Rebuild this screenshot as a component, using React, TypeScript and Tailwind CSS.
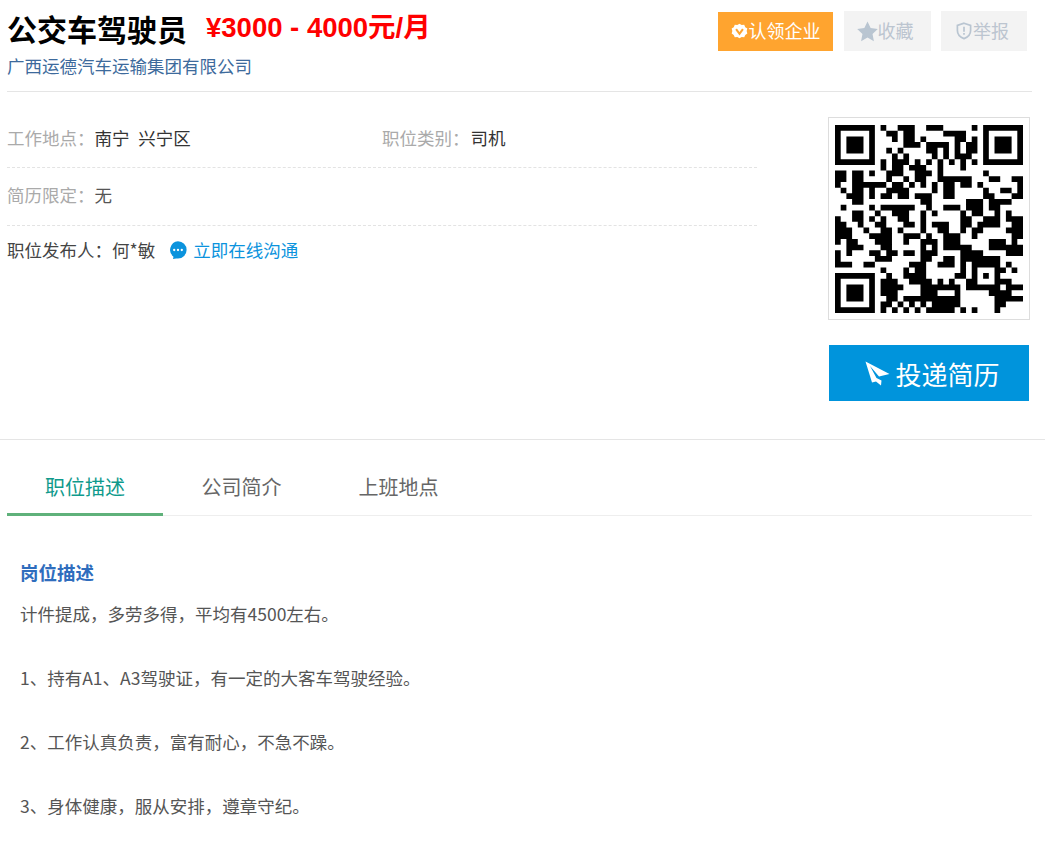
const QR_ROWS: number[][][] = [
  [[8,9],[11,14],[16,19],[24,25]],
  [[9,11],[12,14],[19,23]],
  [[10,11],[12,14],[15,16],[21,23],[24,25]],
  [[12,15],[16,20],[21,22],[23,24],[24,25]],
  [[9,10],[11,12],[16,18],[19,20],[21,22],[23,25]],
  [[10,11],[12,13],[17,18],[19,20],[21,24]],
  [[8,9],[10,12],[12,13],[14,15],[16,17],[18,19],[20,21],[22,23],[24,25]],
  [[8,9],[10,12],[13,16],[18,19],[22,23]],
  [[0,2],[3,5],[6,7],[9,12],[14,17],[18,19],[26,27]],
  [[0,2],[3,5],[9,10],[12,13],[14,16],[18,24],[27,29],[31,33]],
  [[0,1],[3,9],[10,12],[13,14],[15,16],[17,18],[19,21],[22,24],[25,26],[32,33]],
  [[1,2],[3,5],[6,7],[9,13],[17,18],[19,21],[26,27],[29,31],[32,33]],
  [[2,5],[6,7],[8,10],[11,13],[14,17],[19,21],[26,28],[31,33]],
  [[3,5],[15,17],[23,26],[27,31]],
  [[1,2],[6,7],[8,14],[16,17],[19,22],[23,26],[27,29]],
  [[3,5],[7,8],[10,13],[15,16],[17,18],[22,23],[24,26],[28,29],[30,31]],
  [[0,1],[3,5],[6,7],[8,9],[11,13],[15,16],[22,24],[26,29],[30,33]],
  [[0,2],[4,5],[7,9],[12,14],[15,16],[17,20],[22,24],[25,29],[31,33]],
  [[0,3],[5,6],[8,10],[11,12],[15,16],[18,20],[22,23],[24,26],[30,33]],
  [[0,3],[6,10],[12,15],[16,17],[19,22],[24,25],[31,33]],
  [[0,1],[2,4],[7,10],[12,13],[15,18],[19,22],[27,30],[31,32]],
  [[2,5],[8,10],[15,16],[17,18],[19,24],[27,33]],
  [[0,1],[2,3],[6,8],[9,11],[12,14],[15,18],[22,26],[30,33]],
  [[0,1],[7,10],[15,17],[19,21],[22,29]],
  [[0,3],[5,7],[13,16],[18,21],[22,23],[24,29],[30,31]],
  [[8,9],[12,13],[14,16],[22,23],[24,25],[28,30],[31,32]],
  [[9,10],[12,16],[21,23],[24,25],[26,27],[28,29]],
  [[8,11],[13,17],[18,19],[20,21],[23,25],[28,31]],
  [[8,12],[15,18],[18,22],[23,29],[30,33]],
  [[8,11],[15,18],[21,22],[27,31]],
  [[9,11],[12,22],[28,33]],
  [[8,10],[11,12],[13,14],[15,16],[17,22],[28,30]],
  [[8,9],[10,11],[12,13],[14,15],[16,21],[22,23],[24,25],[28,29]],
];

function finder(x: number, y: number) {
  return `M${x} ${y}h7v7h-7zM${x + 1} ${y + 1}v5h5v-5zM${x + 2} ${y + 2}h3v3h-3z`;
}

const qrPath = QR_ROWS.map((row, r) =>
  row.map(([a, b]) => `M${a} ${r}h${b - a}v1h-${b - a}z`).join("")
).join("");

function Qr() {
  return (
    <svg viewBox="0 0 33 33" className="block h-[188px] w-[188px]">
      <path d={qrPath} fill="#000" />
      <path d={finder(0, 0) + finder(26, 0) + finder(0, 26)} fill="#000" fillRule="evenodd" />
    </svg>
  );
}

function Badge() {
  return (
    <svg viewBox="0 0 18 18" className="h-[17px] w-[17px] shrink-0">
      <path d="M9 .8l2.3 1.3 2.7-.2 1.1 2.5 2.2 1.5-.7 2.6.7 2.6-2.2 1.5-1.1 2.5-2.7-.2L9 16.2l-2.3-1.3-2.7.2-1.1-2.5-2.2-1.5.7-2.6-.7-2.6 2.2-1.5L4 1.9l2.7.2z" fill="#fff" />
      <path d="M5.4 6.4L9 11.4l3.6-5" fill="none" stroke="#ffa42f" strokeWidth="2.2" />
    </svg>
  );
}

function Star() {
  return (
    <svg viewBox="0 0 20 20" className="h-[21px] w-[21px] shrink-0">
      <path d="M10 .4l3 6.3 6.8.9-5 4.7 1.3 6.9-6.1-3.4-6.1 3.4 1.3-6.9-5-4.7 6.8-.9z" fill="#b9c5d1" />
    </svg>
  );
}

function Shield() {
  return (
    <svg viewBox="0 0 16 18" className="h-[18px] w-[16px] shrink-0">
      <path d="M8 1.2l6.6 2.2v5c0 3.8-2.8 6.7-6.6 8.2C4.2 15.1 1.4 12.2 1.4 8.4v-5z" fill="none" stroke="#b9c5d1" strokeWidth="1.7" />
      <path d="M8 4.8v5M8 11v1.8" stroke="#b9c5d1" strokeWidth="1.7" fill="none" />
    </svg>
  );
}

function Chat() {
  return (
    <svg viewBox="0 0 18 18" className="h-[18px] w-[18px] shrink-0">
      <path d="M9 .3a8.6 8.6 0 0 1 0 17.2H7.2l-3.2.4.5-2.2A8.6 8.6 0 0 1 9 .3z" fill="#0b93dd" />
      <circle cx="5.2" cy="9" r="1.15" fill="#fff" />
      <circle cx="9" cy="9" r="1.15" fill="#fff" />
      <circle cx="12.8" cy="9" r="1.15" fill="#fff" />
    </svg>
  );
}

function Plane() {
  return (
    <svg viewBox="0 0 25 25" className="h-[25px] w-[25px] shrink-0">
      <path d="M0.5 0.5L24.5 13L14 15.5L5 5L11.5 17L16.5 19.5L16 24.5L11 20.5L7 21.5z" fill="#fff" />
    </svg>
  );
}

const lines = [
  "计件提成，多劳多得，平均有4500左右。",
  "",
  "1、持有A1、A3驾驶证，有一定的大客车驾驶经验。",
  "",
  "2、工作认真负责，富有耐心，不急不躁。",
  "",
  "3、身体健康，服从安排，遵章守纪。",
];

export default function App() {
  return (
    <div className="w-[1045px] bg-white text-[17.5px] text-[#555] [font-family:'Noto_Sans_CJK_SC','Liberation_Sans',sans-serif]">
      <div className="ml-[7px] flex h-[92px] w-[1025px] justify-between border-b border-[#e5e5e5]">
        <div>
          <div className="flex h-[55px] items-center">
            <h1 className="text-[30px] leading-[34px] font-bold text-black">公交车驾驶员</h1>
            <span className="ml-[19px] text-[27.5px] leading-[34px] font-bold text-[#ff0000] [font-family:'Liberation_Sans','Noto_Sans_CJK_SC',sans-serif]">
              ¥3000 - 4000元/月
            </span>
          </div>
          <div className="text-[17.5px] leading-[22px] text-[#3d6a9c]">广西运德汽车运输集团有限公司</div>
        </div>
        <div className="mr-[5px] flex items-start gap-[10px] pt-[11px] text-[18px]">
          <div className="mt-[1px] mr-[1px] flex h-[39px] w-[115px] items-center justify-center gap-[1px] bg-[#ffa42f] text-white">
            <Badge />
            <span className="relative -top-[1px]">认领企业</span>
          </div>
          <div className="flex h-[40px] w-[87px] items-center justify-center bg-[#f3f3f3] pr-[5px] text-[#bcc5d0]">
            <Star />
            <span className="relative -top-[1px]">收藏</span>
          </div>
          <div className="flex h-[40px] w-[86px] items-center justify-center gap-[1px] bg-[#f3f3f3] pr-[3px] text-[#bcc5d0]">
            <Shield />
            <span className="relative -top-[1px]">举报</span>
          </div>
        </div>
      </div>

      <div className="flex h-[348px] border-b border-[#e5e5e5] pl-[7px]">
        <div className="w-[750px] pt-[18px]">
          <div className="flex h-[58px] items-center border-b border-dashed border-[#e3e3e3]">
            <div className="flex w-[375px]">
              <span className="text-[#aaa]">工作地点：</span>
              <span className="text-[#333]">南宁&nbsp;&nbsp;<span className="ml-[1px]">兴宁区</span></span>
            </div>
            <div className="flex">
              <span className="text-[#aaa]">职位类别：</span>
              <span className="ml-[1px] text-[#333]">司机</span>
            </div>
          </div>
          <div className="flex h-[58px] items-center border-b border-dashed border-[#e3e3e3] pb-[2px]">
            <span className="text-[#aaa]">简历限定：</span>
            <span className="text-[#555]">无</span>
          </div>
          <div className="flex h-[48px] items-center text-[#444]">
            <span>职位发布人：</span>
            <span>何*敏</span>
            <span className="ml-[14px]"><Chat /></span>
            <span className="ml-[6px] text-[#0b93dd]">立即在线沟通</span>
          </div>
        </div>
        <div className="ml-[71px] pt-[25px]">
          <div className="flex h-[203px] w-[202px] items-center justify-center border border-[#ddd]">
            <Qr />
          </div>
          <div className="mt-[25px] ml-[1px] flex h-[56px] w-[200px] items-center justify-center gap-[5px] bg-[#0094dc] pl-[7px] text-[26px] text-white">
            <Plane />
            <span>投递简历</span>
          </div>
        </div>
      </div>

      <div className="mt-[20px] ml-[7px] flex h-[56px] w-[1025px] border-b border-[#eee] text-[20px] text-[#666]">
        <div className="flex h-[56px] w-[156px] items-center justify-center border-b-[3px] border-[#5fb17a] text-[#0f9a8c]">职位描述</div>
        <div className="flex h-[53px] w-[157px] items-center justify-center">公司简介</div>
        <div className="flex h-[53px] w-[157px] items-center justify-center">上班地点</div>
      </div>

      <div className="px-[20px] pt-[40px] pb-[20px]">
        <div className="text-[18.5px] leading-[32px] font-bold text-[#2f6dbd]">岗位描述</div>
        <div className="mt-[10px] text-[17.5px] leading-[32px] text-[#555]">
          {lines.map((l, i) => (
            <div key={i} className="h-[32px]">{l}</div>
          ))}
        </div>
      </div>
    </div>
  );
}
